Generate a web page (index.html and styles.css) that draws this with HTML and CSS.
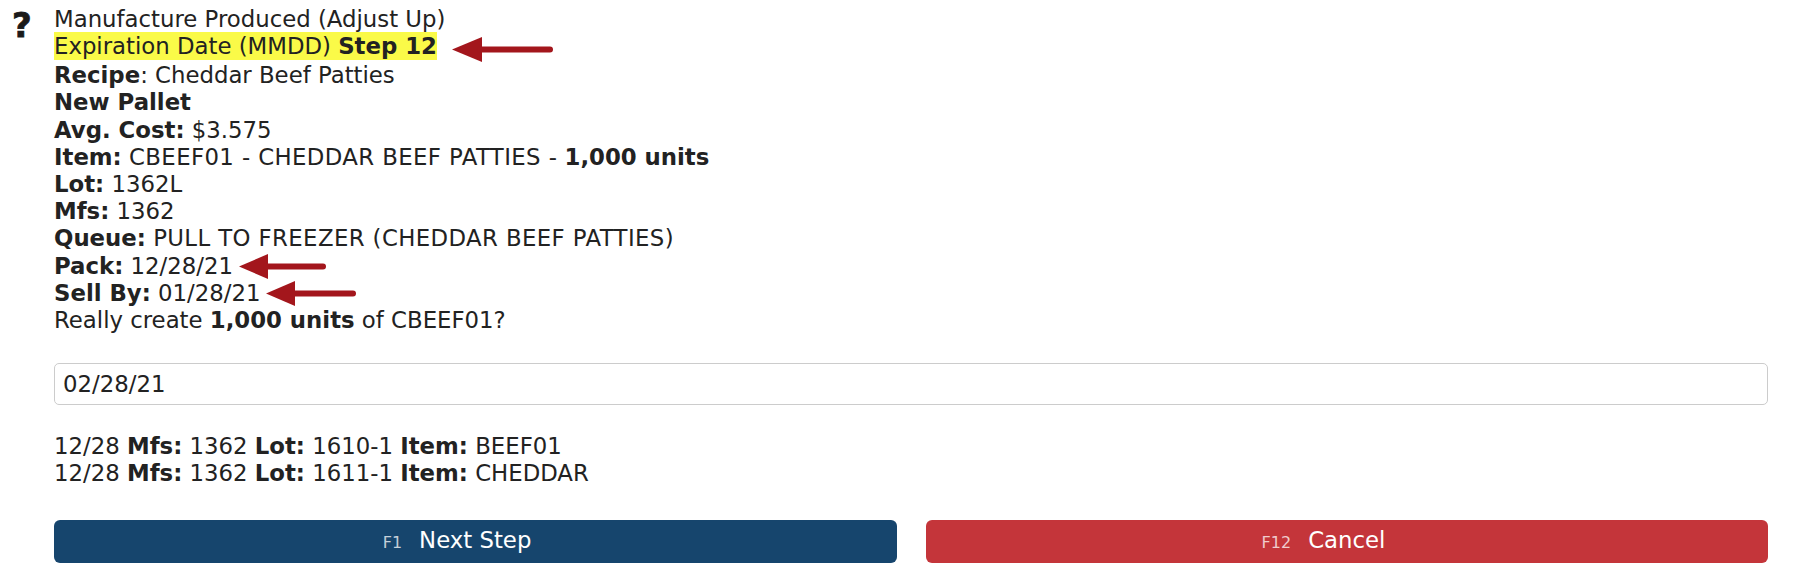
FILE: index.html
```html
<!DOCTYPE html>
<html lang="en">
<head>
    <meta charset="UTF-8">
    <meta name="viewport" content="width=device-width, initial-scale=1.0">
    <title>Manufacture Produced</title>
    <link rel="stylesheet" href="styles.css">
</head>
<body>
    <div class="screen">
        <div class="help">?</div>
        <div class="step">
            <div class="info">
                <div>Manufacture Produced (Adjust Up)</div>
                <div>
                    <span class="mark">Expiration Date (MMDD) <b>Step 12</b></span><svg class="arrow arrow-top" width="101" height="25" viewBox="0 0 101 25"><polygon points="0,12.5 30,0 30,25"/><line x1="28" y1="12.5" x2="98" y2="12.5"/></svg>
                </div>
                <div><b>Recipe</b>: Cheddar Beef Patties</div>
                <div><b>New Pallet</b></div>
                <div><b>Avg. Cost:</b> $3.575</div>
                <div><b>Item:</b> <span class="caps">CBEEF01 - CHEDDAR BEEF PATTIES -</span> <b>1,000 units</b></div>
                <div><b>Lot:</b> 1362L</div>
                <div><b>Mfs:</b> 1362</div>
                <div><b>Queue:</b> <span class="caps">PULL TO FREEZER (CHEDDAR BEEF PATTIES)</span></div>
                <div><b>Pack:</b> 12/28/21<svg class="arrow" width="87" height="25" viewBox="0 0 87 25"><polygon points="0,12.5 29,0 29,25"/><line x1="27" y1="12.5" x2="84" y2="12.5"/></svg></div>
                <div><b>Sell By:</b> 01/28/21<svg class="arrow" width="90" height="25" viewBox="0 0 90 25"><polygon points="0,12.5 29,0 29,25"/><line x1="27" y1="12.5" x2="87" y2="12.5"/></svg></div>
                <div>Really create <b>1,000 units</b> of CBEEF01?</div>
            </div>

            <input type="text" class="entry" id="entry" value="02/28/21">

            <div class="lots">
                <div>12/28 <b>Mfs:</b> 1362 <b>Lot:</b> 1610-1 <b>Item:</b> BEEF01</div>
                <div>12/28 <b>Mfs:</b> 1362 <b>Lot:</b> 1611-1 <b>Item:</b> CHEDDAR</div>
            </div>

            <div class="actions">
                <button class="btn btn-next"><span class="key">F1</span><span>Next Step</span><span></span></button>
                <button class="btn btn-cancel"><span class="key">F12</span><span>Cancel</span><span></span></button>
            </div>
        </div>
    </div>
</body>
</html>
```

FILE: styles.css
```css
body {
    margin: 0;
    background-color: #fff;
    color: #222;
    font-family: "DejaVu Sans", Verdana, sans-serif;
    font-size: 22.8px;
    line-height: 27.2px;
}
.screen {
    display: flex;
    flex-direction: row;
    align-items: flex-start;
    padding: 6px 36px 17px 12px;
}
.help {
    width: 42px;
    flex: none;
    margin-top: 3px;
    font-size: 34px;
    line-height: 33px;
    font-weight: bold;
    color: #1a1a1a;
    -webkit-text-stroke: 0.8px #1a1a1a;
}
.step {
    flex: 1;
    display: flex;
    flex-direction: column;
}
.caps {
    letter-spacing: 0.4px;
}
.mark {
    background-color: #fafa48;
    padding: 1px 0;
}
.arrow {
    vertical-align: -5px;
    margin-left: 6px;
}
.arrow-top {
    vertical-align: -8px;
    margin-left: 15px;
}
.arrow polygon {
    fill: #a3161c;
}
.arrow line {
    stroke: #a3161c;
    stroke-width: 6;
    stroke-linecap: round;
}
.entry {
    box-sizing: border-box;
    width: 100%;
    height: 42px;
    margin-top: 29px;
    padding: 0 8px;
    border: 1px solid #ccc;
    border-radius: 5px;
    font-family: inherit;
    font-size: 22.8px;
    color: #222;
}
.lots {
    margin-top: 28px;
}
.actions {
    display: grid;
    grid-template-columns: 1fr 1fr;
    gap: 29px;
    margin-top: 32px;
}
.btn {
    display: grid;
    grid-template-columns: 1fr auto 1fr;
    align-items: baseline;
    height: 43px;
    border: 0;
    border-radius: 6px;
    color: #fff;
    font-family: inherit;
    font-size: 22.8px;
    padding: 0;
    padding-top: 7px;
}
.key {
    justify-self: end;
    margin-right: 17px;
    font-size: 16px;
    color: rgba(255, 255, 255, 0.75);
}
.btn-next {
    background-color: #16456d;
}
.btn-cancel {
    background-color: #c4353a;
}
```
